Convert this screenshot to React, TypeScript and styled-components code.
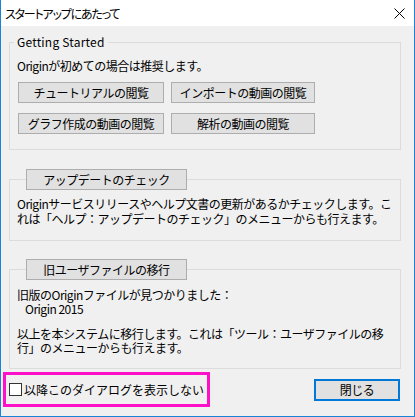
import React from 'react';
import styled, { createGlobalStyle } from 'styled-components';

const GlobalStyle = createGlobalStyle`
  html, body {
    margin: 0;
    padding: 0;
    background: #f0f0f0;
  }
  body {
    font-family: "Noto Sans CJK JP", "Noto Sans", sans-serif;
    font-size: 12px;
    color: #000;
  }
`;

const Window = styled.div`
  box-sizing: border-box;
  width: 415px;
  height: 417px;
  display: flex;
  flex-direction: column;
  background: #f0f0f0;
  border: 1px solid #1883d7;
  border-top: none;
`;

const TitleBar = styled.div`
  height: 26px;
  flex: none;
  display: flex;
  align-items: center;
  justify-content: space-between;
  background: #fff;
  padding: 0 9px 0 4px;
  font-size: 12px;
  font-feature-settings: "palt";
  letter-spacing: -1.2px;
`;

const CloseIcon = styled.svg`
  width: 11px;
  height: 11px;
  display: block;
`;

const Content = styled.div`
  padding: 0 13px 0 8px;
  display: flex;
  flex-direction: column;
  letter-spacing: -0.5px;
`;

const Group = styled.fieldset<{ $top: number; $padTop: number; $padBottom: number }>`
  margin: ${p => p.$top}px 0 0 0;
  padding: ${p => p.$padTop}px 8px ${p => p.$padBottom}px 7px;
  border: 1px solid #dcdcdc;
  min-width: 0;
`;

const TextLegend = styled.legend`
  margin-left: -3px;
  padding: 0 3px;
  line-height: 16px;
  letter-spacing: 0.2px;
`;

const ButtonLegend = styled.legend`
  margin-left: 9px;
  padding: 0;
`;

const PushButton = styled.button<{ $width: number; $focused?: boolean }>`
  box-sizing: border-box;
  width: ${p => p.$width}px;
  height: ${p => (p.$focused ? 22 : 21)}px;
  padding: 0;
  margin: 0;
  background: #e1e1e1;
  border: ${p => (p.$focused ? '2px solid #0078d7' : '1px solid #adadad')};
  font-family: inherit;
  font-size: 12px;
  letter-spacing: -0.5px;
  color: #000;
  display: flex;
  align-items: center;
  justify-content: center;
  white-space: nowrap;
`;

const Text = styled.div<{ $lh: number; $gap?: number; $indent?: number }>`
  line-height: ${p => p.$lh}px;
  margin-top: ${p => p.$gap ?? 0}px;
  padding-left: ${p => p.$indent ?? 0}px;
  white-space: nowrap;
`;

const ButtonGrid = styled.div`
  margin: 9px 0 0 1px;
  display: grid;
  grid-template-columns: 146px 144px;
  column-gap: 7px;
  row-gap: 10px;
`;

const Footer = styled.div`
  padding: 3px 14px 0 2px;
  display: flex;
  align-items: center;
  justify-content: space-between;
`;

const Highlight = styled.label`
  box-sizing: border-box;
  width: 207px;
  height: 35px;
  border: 3px solid #ff10c8;
  display: flex;
  align-items: center;
  gap: 2px;
  padding-left: 3px;
  font-size: 12px;
  letter-spacing: 0;
  white-space: nowrap;
`;

const CheckBox = styled.span`
  box-sizing: border-box;
  width: 13px;
  height: 13px;
  border: 1px solid #333;
  background: #fff;
  flex: none;
`;

export default function App() {
  return (
    <>
      <GlobalStyle />
      <Window>
        <TitleBar>
          <span>スタートアップにあたって</span>
          <CloseIcon viewBox="0 0 11 11">
            <path d="M0.5 0.5 L10.5 10.5 M10.5 0.5 L0.5 10.5" stroke="#000" strokeWidth="1" fill="none" />
          </CloseIcon>
        </TitleBar>
        <Content>
          <Group $top={8} $padTop={8} $padBottom={15}>
            <TextLegend>Getting Started</TextLegend>
            <Text $lh={15}>Originが初めての場合は推奨します。</Text>
            <ButtonGrid>
              <PushButton $width={146}>チュートリアルの閲覧</PushButton>
              <PushButton $width={144}>インポートの動画の閲覧</PushButton>
              <PushButton $width={146}>グラフ作成の動画の閲覧</PushButton>
              <PushButton $width={144}>解析の動画の閲覧</PushButton>
            </ButtonGrid>
          </Group>

          <Group $top={19} $padTop={6} $padBottom={14}>
            <ButtonLegend>
              <PushButton $width={161}>アップデートのチェック</PushButton>
            </ButtonLegend>
            <Text $lh={15}>
              Originサービスリリースやヘルプ文書の更新があるかチェックします。こ
              <br />
              れは「ヘルプ：アップデートのチェック」のメニューからも行えます。
            </Text>
          </Group>

          <Group $top={18} $padTop={8} $padBottom={13}>
            <ButtonLegend>
              <PushButton $width={161}>旧ユーザファイルの移行</PushButton>
            </ButtonLegend>
            <Text $lh={14}>旧版のOriginファイルが見つかりました：</Text>
            <Text $lh={14} $indent={8}>Origin 2015</Text>
            <Text $lh={14} $gap={11}>
              以上を本システムに移行します。これは「ツール：ユーザファイルの移
              <br />
              行」のメニューからも行えます。
            </Text>
          </Group>
        </Content>
        <Footer>
          <Highlight>
            <CheckBox />
            <span>以降このダイアログを表示しない</span>
          </Highlight>
          <PushButton $width={86} $focused>閉じる</PushButton>
        </Footer>
      </Window>
    </>
  );
}
